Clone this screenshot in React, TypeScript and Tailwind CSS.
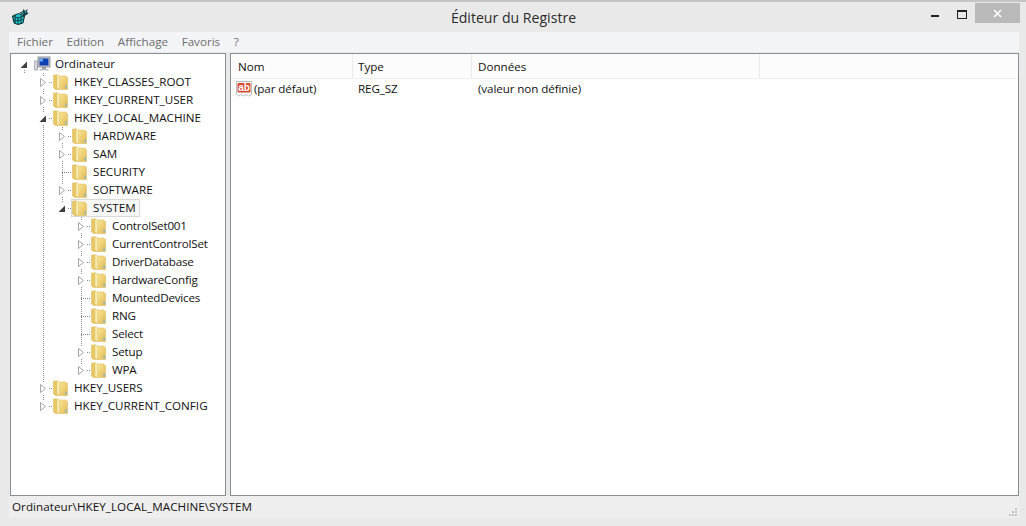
const font = { fontFamily: '"Open Sans", "Noto Sans", sans-serif' };

function Folder() {
  return (
    <svg width="15" height="18" viewBox="0 0 15 18" className="mr-[1px] shrink-0">
      <defs>
        <linearGradient id="fold" x1="0" y1="0" x2="1" y2="1">
          <stop offset="0" stopColor="#f9e79a" />
          <stop offset="1" stopColor="#e2b94f" />
        </linearGradient>
      </defs>
      <path d="M0.5 2h4l1 1v13.5H2.5L0.5 15z" fill="#e8c765" stroke="#d8b556" strokeWidth="0.5" />
      <path d="M6 3h6.5l2 1.5V16.5H6z" fill="url(#fold)" stroke="#d8b556" strokeWidth="0.5" />
      <path d="M4 1l2.5 2v14l-2.5-2.5z" fill="#f8edb4" stroke="#dcc06a" strokeWidth="0.4" />
      <rect x="12.4" y="12.5" width="1.4" height="3" fill="#7fb7d6" />
    </svg>
  );
}

function Computer() {
  return (
    <svg width="17" height="16" viewBox="0 0 17 16" className="shrink-0">
      <rect x="0.5" y="5" width="3" height="9" fill="#d5d8dc" stroke="#8b9096" strokeWidth="0.6" />
      <rect x="4" y="1" width="12" height="10" fill="#c8ccd0" stroke="#7b8086" strokeWidth="0.8" />
      <rect x="5.5" y="2.5" width="9" height="7" fill="#0c3fb0" />
      <rect x="5.5" y="2.5" width="3.5" height="3" fill="#6fa8ee" />
      <rect x="8" y="11" width="4" height="2" fill="#9a9ea3" />
      <rect x="5.5" y="13" width="9" height="1.4" fill="#b8bcc0" />
    </svg>
  );
}

function AppIcon() {
  return (
    <svg width="17" height="17" viewBox="0 0 17 17" className="shrink-0">
      <path d="M0.5 8l6-2.5 6 2.5-1.5 7-5 1.5-4-1.5z" fill="#25c4cc" stroke="#06282c" strokeWidth="1" />
      <path d="M6 9v7M0.8 8.5l5.2 1.5 6-2M3.2 7v8M9 7.5v8M1 11.5l5 1.5 5.5-2" fill="none" stroke="#06282c" strokeWidth="0.8" />
      <path d="M7.5 4.5l3-1 1-2.5 1.5 2 2.5-2-0.5 3 1.5 1.5-3 2-2 1.5-1-2.5z" fill="#123c46" />
      <path d="M9.5 5l1.5-1 .5 2zM13 3l1.5 .5-1 2z" fill="#4fd6dc" />
    </svg>
  );
}

function StringIcon() {
  return (
    <svg width="16" height="16" viewBox="0 0 16 16" className="shrink-0">
      <path d="M0.5 0.5h15v13l-3 1.5-2.5-1.5-2.5 1.5-2.5-1.5-2.5 1.5-2-1.5z" fill="#fff" stroke="#b4b4b4" strokeWidth="0.9" />
      <rect x="1.5" y="2" width="13" height="9.5" rx="1" fill="#d7472c" />
      <text x="8" y="10" textAnchor="middle" fontSize="10" fontWeight="700" fill="#fff" fontFamily="Liberation Sans">ab</text>
    </svg>
  );
}

type Kind = 'none' | 'open' | 'closed';

function Cell({ up, down, across, exp }: { up?: boolean; down?: boolean; across?: boolean; exp?: Kind }) {
  return (
    <svg width="19" height="18" viewBox="0 0 19 18" className="shrink-0">
      {up && <line x1="9.5" y1="0" x2="9.5" y2={down ? 18 : 9} stroke="#8a8a8a" strokeDasharray="1 1" />}
      {!up && down && <line x1="9.5" y1="9" x2="9.5" y2="18" stroke="#8a8a8a" strokeDasharray="1 1" />}
      {across && <line x1="9" y1="9.5" x2="19" y2="9.5" stroke="#8a8a8a" strokeDasharray="1 1" />}
      {exp === 'closed' && (
        <>
          <rect x="5" y="3" width="9" height="12" fill="#fff" />
          <path d="M6.5 5.5l5 4-5 4z" fill="#fff" stroke="#a6a6a6" />
        </>
      )}
      {exp === 'open' && (
        <>
          <rect x="5" y="3" width="9" height="12" fill="#fff" />
          <path d="M12 6.5v6.5H5.5z" fill="#404040" />
        </>
      )}
    </svg>
  );
}

type Node = { label: string; depth: number; exp: Kind; guides: number[]; last?: boolean; selected?: boolean };

const nodes: Node[] = [
  { label: 'HKEY_CLASSES_ROOT', depth: 1, exp: 'closed', guides: [] },
  { label: 'HKEY_CURRENT_USER', depth: 1, exp: 'closed', guides: [] },
  { label: 'HKEY_LOCAL_MACHINE', depth: 1, exp: 'open', guides: [] },
  { label: 'HARDWARE', depth: 2, exp: 'closed', guides: [1] },
  { label: 'SAM', depth: 2, exp: 'closed', guides: [1] },
  { label: 'SECURITY', depth: 2, exp: 'none', guides: [1] },
  { label: 'SOFTWARE', depth: 2, exp: 'closed', guides: [1] },
  { label: 'SYSTEM', depth: 2, exp: 'open', guides: [1], last: true, selected: true },
  { label: 'ControlSet001', depth: 3, exp: 'closed', guides: [1] },
  { label: 'CurrentControlSet', depth: 3, exp: 'closed', guides: [1] },
  { label: 'DriverDatabase', depth: 3, exp: 'closed', guides: [1] },
  { label: 'HardwareConfig', depth: 3, exp: 'closed', guides: [1] },
  { label: 'MountedDevices', depth: 3, exp: 'none', guides: [1] },
  { label: 'RNG', depth: 3, exp: 'none', guides: [1] },
  { label: 'Select', depth: 3, exp: 'none', guides: [1] },
  { label: 'Setup', depth: 3, exp: 'closed', guides: [1] },
  { label: 'WPA', depth: 3, exp: 'closed', guides: [1], last: true },
  { label: 'HKEY_USERS', depth: 1, exp: 'closed', guides: [] },
  { label: 'HKEY_CURRENT_CONFIG', depth: 1, exp: 'closed', guides: [], last: true },
];

function Row({ n }: { n: Node }) {
  const cells = [];
  for (let i = 0; i < n.depth; i++) {
    cells.push(<Cell key={i} up={n.guides.includes(i)} down={n.guides.includes(i)} />);
  }
  return (
    <div className="flex h-[18px] items-center">
      {cells}
      <Cell up down={!n.last} across exp={n.exp} />
      {n.selected ? (
        <div className="-ml-[1px] flex h-[18px] items-center border border-[#d9d9d9] bg-[#f7f7f7] pr-[3px]">
          <Folder />
          <span className="ml-[5px] whitespace-nowrap">{n.label}</span>
        </div>
      ) : (
        <>
          <Folder />
          <span className={n.depth === 3 ? 'ml-[5px] whitespace-nowrap tracking-[-0.2px]' : 'ml-[5px] whitespace-nowrap'}>{n.label}</span>
        </>
      )}
    </div>
  );
}

export default function App() {
  return (
    <div style={font} className="flex h-[526px] w-[1026px] flex-col overflow-hidden bg-[#e9e9e9] text-[11.65px] leading-[18px] text-[#111111]">
      <div className="h-[2px] shrink-0 bg-[#c4c4c4]" />
      <div className="flex h-[30px] shrink-0">
        <div className="flex w-[340px] items-center pb-[1px] pl-[12px]">
          <AppIcon />
        </div>
        <div className="flex-1 pl-[1px] pt-[6px] text-center text-[14.1px] leading-[20px] text-[#2b2b2b]">Éditeur du Registre</div>
        <div className="flex w-[340px] justify-end pr-[6px] pt-[1px]">
          <div className="mr-[18px] mt-[12px] h-[2px] w-[8px] bg-[#222222]" />
          <div className="mr-[8px] mt-[7px] h-[9px] w-[10px] border border-t-[2px] border-[#222222]" />
          <div className="flex h-[20px] w-[45px] items-center justify-center bg-[#b9b9b9]">
            <svg width="9" height="9" viewBox="0 0 9 9">
              <path d="M1 1l7 7M8 1l-7 7" stroke="#fff" strokeWidth="1.7" />
            </svg>
          </div>
        </div>
      </div>
      <div className="mx-[9px] w-[1010px] shrink-0">
        <div className="flex h-[20px] items-center gap-[13.6px] bg-[#f3f4f7] pl-[8px] text-[#6d6d6d]">
          <span>Fichier</span>
          <span>Edition</span>
          <span>Affichage</span>
          <span>Favoris</span>
          <span>?</span>
        </div>
        <div className="flex h-[444px] gap-[4px] pl-[1px] pt-[1px]">
          <div className="w-[216px] overflow-hidden border border-[#8a8d92] bg-white pl-[4px] pt-[1px]">
            <div className="flex h-[18px] items-center">
              <Cell down exp="open" />
              <Computer />
              <span className="ml-[4px]">Ordinateur</span>
            </div>
            {nodes.map((n) => (
              <Row key={n.label} n={n} />
            ))}
          </div>
          <div className="w-[789px] border border-[#8a8d92] bg-white">
            <div className="flex h-[25px] items-center border-b border-[#e5effa] bg-[#fcfcfc]">
              <div className="h-full w-[122px] border-r border-[#ececec] pl-[7px] leading-[25px]">Nom</div>
              <div className="h-full w-[119px] border-r border-[#ececec] pl-[5px] leading-[25px]">Type</div>
              <div className="h-full w-[288px] border-r border-[#ececec] pl-[6px] leading-[25px]">Données</div>
            </div>
            <div className="mt-[1px] flex h-[18px] items-center pl-[5px] tracking-[-0.1px]">
              <StringIcon />
              <span className="ml-[2px] w-[104px]">(par défaut)</span>
              <span className="w-[120px]">REG_SZ</span>
              <span>(valeur non définie)</span>
            </div>
          </div>
        </div>
        <div className="flex h-[22px] items-center justify-between bg-[#eeeeee] pl-[3px]">
          <span className="tracking-[0.05px]">Ordinateur\HKEY_LOCAL_MACHINE\SYSTEM</span>
          <svg width="10" height="10" viewBox="0 0 10 10" className="mr-[1px] mt-[11px]" fill="#c4c4c4">
            <rect x="7" y="0" width="2" height="2" />
            <rect x="4" y="3" width="2" height="2" />
            <rect x="7" y="3" width="2" height="2" />
            <rect x="1" y="6" width="2" height="2" />
            <rect x="4" y="6" width="2" height="2" />
            <rect x="7" y="6" width="2" height="2" />
          </svg>
        </div>
      </div>
    </div>
  );
}
